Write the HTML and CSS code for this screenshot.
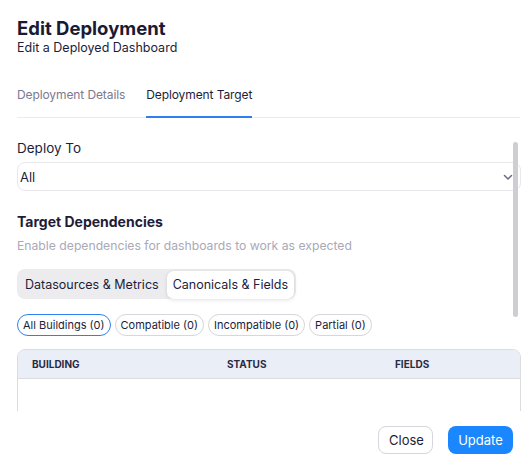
FILE: index.html
```html
<!DOCTYPE html>
<html lang="en">
<head>
    <meta charset="UTF-8">
    <meta name="viewport" content="width=device-width, initial-scale=1.0">
    <title>Edit Deployment</title>
    <link rel="stylesheet" href="styles.css">
</head>
<body>
    <div class="modal">
        <div class="modal-header">
            <div class="title">Edit Deployment</div>
            <div class="subtitle">Edit a Deployed Dashboard</div>
        </div>
        <div class="tabs">
            <div class="tab">Deployment Details</div>
            <div class="tab active">Deployment Target</div>
        </div>
        <div class="scroll-area">
            <div class="content">
                <div class="label">Deploy To</div>
                <div class="select">
                    <span>All</span>
                    <svg class="chevron" width="12" height="12" viewBox="0 0 12 12">
                        <path d="M2.5 4.5 L6 8 L9.5 4.5" fill="none" stroke="#6b6b80" stroke-width="1.5" stroke-linecap="round" stroke-linejoin="round"/>
                    </svg>
                </div>
                <div class="section-title">Target Dependencies</div>
                <div class="section-desc">Enable dependencies for dashboards to work as expected</div>
                <div class="segmented">
                    <div class="segment">Datasources &amp; Metrics</div>
                    <div class="segment selected">Canonicals &amp; Fields</div>
                </div>
                <div class="pills">
                    <div class="pill active">All Buildings (0)</div>
                    <div class="pill">Compatible (0)</div>
                    <div class="pill">Incompatible (0)</div>
                    <div class="pill">Partial (0)</div>
                </div>
                <div class="table">
                    <div class="table-head">
                        <div class="col col-building">Building</div>
                        <div class="col col-status">Status</div>
                        <div class="col col-fields">Fields</div>
                    </div>
                    <div class="table-body"></div>
                </div>
            </div>
            <div class="scrollbar"></div>
        </div>
        <div class="footer">
            <button class="btn btn-close">Close</button>
            <button class="btn btn-primary">Update</button>
        </div>
    </div>
</body>
</html>
```

FILE: styles.css
```css
body {
    margin: 0;
    font-family: Inter, 'Noto Sans', sans-serif;
    background-color: #fff;
    color: #1d1d3a;
}
.modal {
    width: 530px;
    height: 470px;
    display: flex;
    flex-direction: column;
}
.modal-header {
    padding: 17px 17px 0;
}
.title {
    font-size: 18.5px;
    font-weight: 700;
    line-height: 22px;
    color: #1a1a33;
}
.subtitle {
    font-size: 12.5px;
    line-height: 18px;
    color: #1d1d3a;
}
.tabs {
    display: flex;
    gap: 21px;
    margin: 24px 10px 0 17px;
    border-bottom: 1px solid #ececf0;
}
.tab {
    font-size: 12px;
    letter-spacing: -0.1px;
    line-height: 18px;
    padding: 5px 0 12px;
    color: #7a7a90;
    border-bottom: 2px solid transparent;
    margin-bottom: -1px;
}
.tab.active {
    color: #1d1d3a;
    border-bottom-color: #2f80ed;
}
.scroll-area {
    position: relative;
    height: 293px;
    overflow: hidden;
}
.content {
    padding: 20px 9px 0 17px;
}
.label {
    font-size: 13.5px;
    line-height: 20px;
    margin-bottom: 4px;
}
.select {
    height: 27px;
    border: 1px solid #e8e8ec;
    border-radius: 8px;
    display: flex;
    align-items: center;
    justify-content: space-between;
    padding: 0 6px 0 2px;
    font-size: 13px;
}
.chevron {
    margin-top: 1px;
}
.section-title {
    font-size: 14px;
    font-weight: 700;
    line-height: 20px;
    margin-top: 21px;
}
.section-desc {
    font-size: 12.2px;
    line-height: 18px;
    color: #a9a9b8;
    margin-top: 5px;
}
.segmented {
    display: inline-flex;
    margin-top: 14px;
    padding: 2px 2px 0 2px;
    height: 28px;
    background-color: #ececee;
    border-radius: 8px;
}
.segment {
    font-size: 12.5px;
    line-height: 28px;
    padding: 0 6px;
    border-radius: 7px;
}
.segment.selected {
    background-color: #fff;
    box-shadow: 0 1px 4px rgba(0, 0, 0, 0.12);
    margin-left: 2px;
}
.pills {
    display: flex;
    gap: 4px;
    margin-top: 15px;
}
.pill {
    font-size: 11px;
    line-height: 20px;
    padding: 0 5px;
    border: 1px solid #d6d6dc;
    border-radius: 11px;
}
.pill.active {
    border-color: #2f80ed;
}
.table {
    margin-top: 13px;
    border: 1px solid #dcdce0;
    border-radius: 8px 8px 0 0;
    overflow: hidden;
}
.table-head {
    display: flex;
    height: 28px;
    align-items: center;
    background-color: #eaeef6;
    border-bottom: 1px solid #dcdce0;
    font-size: 10px;
    font-weight: 700;
    text-transform: uppercase;
    color: #2a2a44;
}
.col-building {
    padding-left: 14px;
    width: 195px;
}
.col-status {
    width: 168px;
}
.table-body {
    height: 60px;
}
.scrollbar {
    position: absolute;
    right: 12px;
    top: 24px;
    width: 5px;
    height: 175px;
    border-radius: 3px;
    background-color: #cdcdd4;
}
.footer {
    display: flex;
    justify-content: flex-end;
    gap: 15px;
    padding: 15px 17px 0;
}
.btn {
    height: 28px;
    font-family: Inter, 'Noto Sans', sans-serif;
    font-size: 13px;
    border-radius: 8px;
    padding: 0 10px;
    cursor: pointer;
}
.btn-close {
    background-color: #fff;
    border: 1px solid #d6d6dc;
    color: #1d1d3a;
    width: 55px;
}
.btn-primary {
    background-color: #1a87ff;
    border: none;
    color: #fff;
    width: 65px;
}
```
